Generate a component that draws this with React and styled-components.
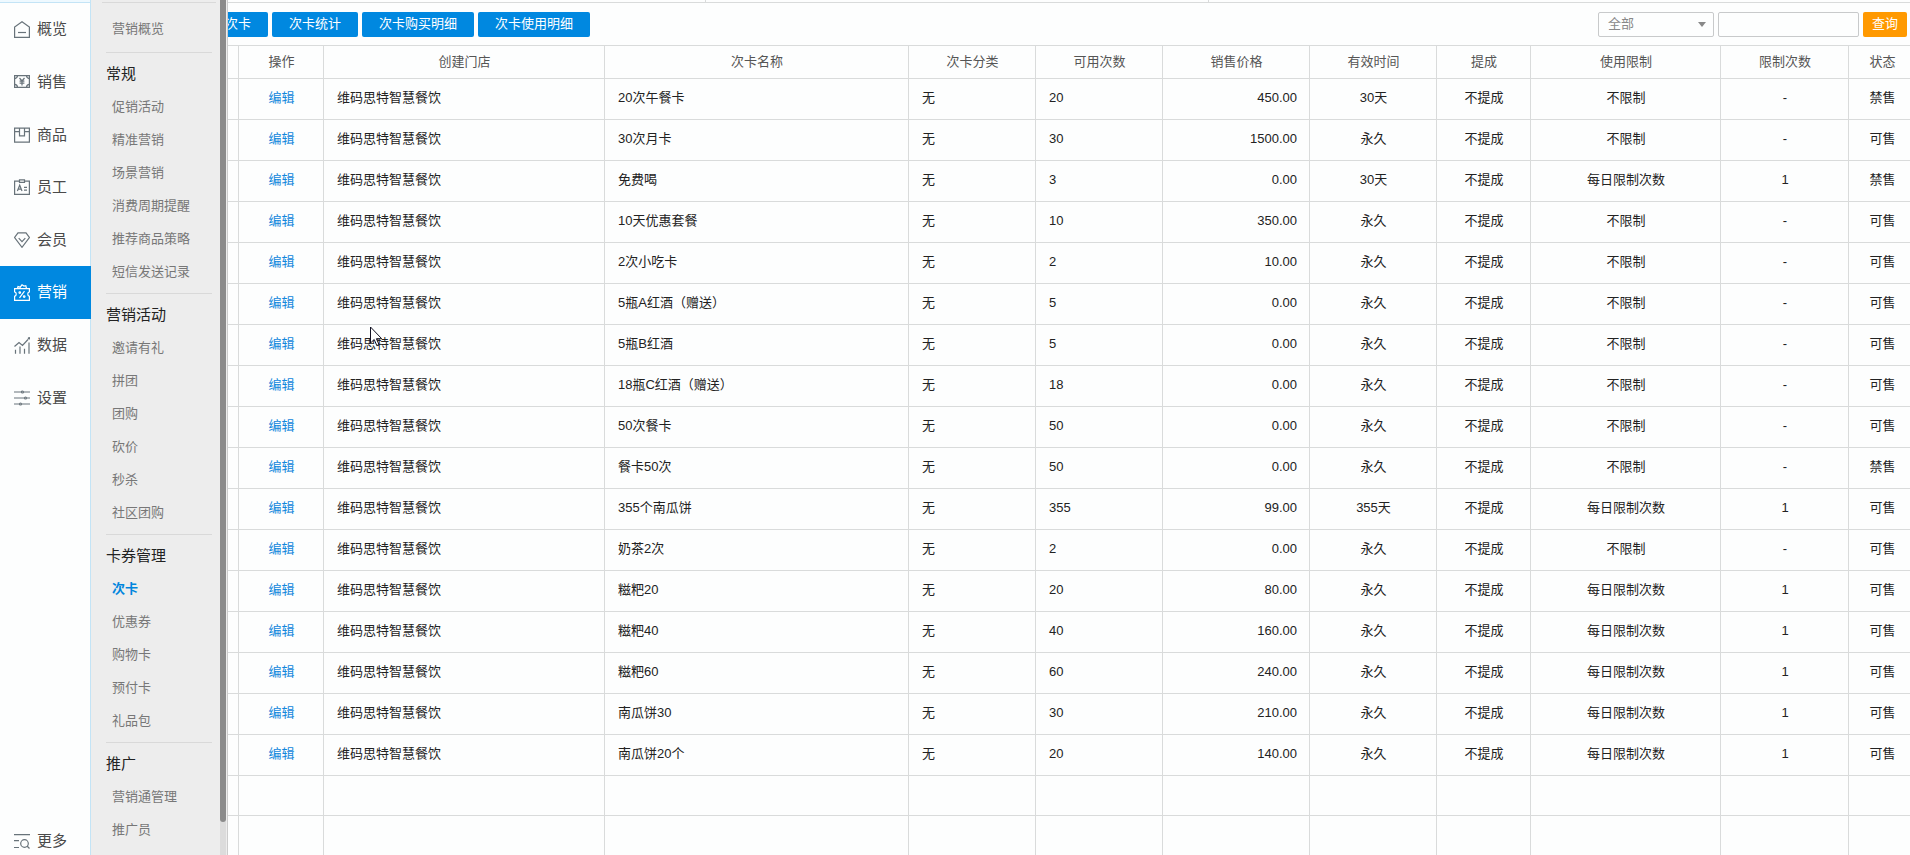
import React, { useState } from 'react'
import styled, { createGlobalStyle } from 'styled-components'

const GlobalStyle = createGlobalStyle`
  * {
    box-sizing: border-box;
  }

  body {
    margin: 0;
    background: #fdfefe;
    color: #222;
    font-family: 'Liberation Sans', 'Noto Sans CJK SC', sans-serif;
    font-size: 13px;
    overflow: hidden;
  }

  a {
    text-decoration: none;
  }

  button, input, select {
    font-family: inherit;
    font-size: 13px;
  }
`

const Page = styled.div`
  position: relative;
  display: grid;
  grid-template-columns: 91px 137px minmax(0, 1fr);
  height: 100vh;
  overflow: hidden;
`

/* ---------- main menu ---------- */

const Sidebar = styled.nav`
  display: flex;
  flex-direction: column;
  justify-content: space-between;
  min-height: 0;
  border-right: 1px solid #c3e4f6;
`

const SidebarTop = styled.div`
  height: 3px;
  background: #eef9ff;
  border-bottom: 1px solid #c3e4f6;
`

const MainMenu = styled.div`
  display: flex;
  flex-direction: column;
  height: 421px;
  margin-bottom: auto;
`

const MainLink = styled.a`
  flex: ${props => props.$bottom ? '0 0 28px' : '1'};
  display: flex;
  align-items: center;
  gap: 7px;
  padding-left: 14px;
  margin-right: ${props => props.$active ? '-1px' : '0'};
  font-size: 15px;
  line-height: 20px;
  color: ${props => props.$active ? '#fff' : '#4a4a4a'};
  background: ${props => props.$active ? '#0088e0' : 'transparent'};

  svg {
    flex: none;
    color: ${props => props.$active ? '#fff' : '#68737a'};
  }
`

/* ---------- sub menu ---------- */

const SubPanel = styled.aside`
  display: flex;
  justify-content: space-between;
  min-height: 0;
  background: #ededed;
  border-right: 1px solid #ccc;
`

const SubMenu = styled.nav`
  flex: 1;
  padding: 2px 4px 0 11px;
  overflow: hidden;
`

const SubHome = styled.div`
  padding: 9px 0 7px 10px;
  border-top: 1px solid #d9d9d9;
`

const SubSection = styled.section`
  margin: 0 4px;
  padding-bottom: 5px;
  border-top: 1px solid #d9d9d9;
`

const SubTitle = styled.h2`
  margin: 0;
  padding-top: 5px;
  font-size: 15px;
  font-weight: 400;
  line-height: 32px;
  color: #222;
`

const SubLink = styled.a`
  display: block;
  padding-left: ${props => props.$flush ? '0' : '6px'};
  line-height: 33px;
  white-space: nowrap;
  color: ${props => props.$active ? '#0085dd' : '#777'};
  font-weight: ${props => props.$active ? '700' : '400'};
`

const Track = styled.div`
  width: 6px;
  margin-right: 1px;
  background: #dcdcdc;
`

const Thumb = styled.div`
  height: calc(100% - 33px);
  background: #8b8b8b;
  border-radius: 0 0 3px 3px;
`

/* ---------- content ---------- */

const Content = styled.main`
  min-width: 0;
  overflow: hidden;
`

const TabStrip = styled.div`
  display: grid;
  grid-template-columns: 478px 503px 1fr;
  height: 3px;
  border-bottom: 1px solid #d9dbdb;
`

const TabEdge = styled.span`
  border-right: 1px solid #d9dbdb;
`

const Toolbar = styled.div`
  display: flex;
  gap: 4px;
  padding: 9px 3px 8px 0;
  margin-left: -20px;
`

const Button = styled.button`
  height: 25px;
  padding: 0 17px 2px;
  border: none;
  border-radius: 2px;
  background: #0088e0;
  color: #fff;
  line-height: 23px;
  white-space: nowrap;
`

const SearchButton = styled(Button)`
  padding: 0 9px 2px;
  background: #ff9900;
`

const Search = styled.form`
  display: flex;
  gap: 4px;
  margin-left: auto;
`

const SelectBox = styled.label`
  display: grid;
  align-items: center;
  width: 116px;

  select, svg {
    grid-area: 1 / 1;
  }

  svg {
    justify-self: end;
    margin-right: 8px;
    pointer-events: none;
  }
`

const Select = styled.select`
  appearance: none;
  height: 25px;
  padding: 0 20px 3px 9px;
  border: 1px solid #c8cacb;
  border-radius: 2px;
  background: #fdfefe;
  color: #888;
`

const Keyword = styled.input`
  width: 141px;
  height: 25px;
  padding: 0 8px;
  border: 1px solid #c8cacb;
  border-radius: 2px;
  background: #fdfefe;
`

const Table = styled.table`
  width: 100%;
  table-layout: fixed;
  border-collapse: separate;
  border-spacing: 0;
  border-top: 1px solid #d9dbdb;
`

const Col = styled.col`
  width: ${props => props.$width || 'auto'};
`

const Th = styled.th`
  height: 33px;
  padding: 0 0 0 ${props => props.$last ? '6px' : '1px'};
  border: solid #d9dbdb;
  border-width: 0 ${props => props.$last ? '0' : '1px'} 1px 0;
  color: #555;
  font-weight: 400;
  line-height: 18px;
  white-space: nowrap;
`

const padding = {
  left: '0 0 2px 13px',
  right: '0 12px 2px 0',
  center: '0 0 2px 1px',
  last: '0 0 2px 6px',
}

const Td = styled.td`
  height: ${props => props.$blank ? '40px' : '41px'};
  padding: ${props => padding[props.$place || 'center']};
  border: solid #d9dbdb;
  border-width: 0 ${props => props.$place === 'last' ? '0' : '1px'} 1px 0;
  text-align: ${props => ['left', 'right'].includes(props.$place) ? props.$place : 'center'};
  line-height: 18px;
  white-space: nowrap;
`

const EditLink = styled.a`
  color: #1287dc;
`

const Pointer = styled.svg`
  position: absolute;
  left: 370px;
  top: 326px;
`

/* ---------- icons ---------- */

const Icon = ({ children, height = 16 }) => (
  <svg width="16" height={height} viewBox={`0 0 16 ${height}`} fill="none" stroke="currentColor" strokeWidth="1.2" aria-hidden="true">
    {children}
  </svg>
)

const icons = {
  home: (
    <Icon height={17}>
      <path d="M.6 16.4V6L8 .8 15.400 6v10.400z" />
      <path d="M4 11.500h8" />
    </Icon>
  ),
  sale: (
    <Icon height={13}>
      <path d="M.6.6h14.800v11.800H.6z" />
      <path d="M.6 3.600Q3.400 3.400 3.500.6M15.400 3.600Q12.600 3.400 12.500.6M.6 9.400q2.800.2 2.900 3M15.400 9.400q-2.800.2-2.900 3" />
      <path d="M5.500 3l2.500 3 2.500-3M8 6v4.500M5.600 6.200h4.800M5.600 8.200h4.800" />
    </Icon>
  ),
  goods: (
    <Icon>
      <path d="M.6 1.100h14.800v14H.6zM.6 4.600h4.900M10.500 4.600h4.900M5.500 1v7.900h5V1" />
    </Icon>
  ),
  staff: (
    <Icon>
      <path d="M5.500 2.100H.6v13.300h14.800V2.100h-4.900" />
      <path d="M5.500.8h5v2.500h-5z" />
      <path d="M3.400 12L5.700 6.200 8 12M4.200 10.200h3M10 8.300h3M10 11.200h3" />
    </Icon>
  ),
  member: (
    <Icon>
      <path d="M4 .8h8l3.400 4.700L8 15.300.6 5.500z" />
      <path d="M4.700 6.200L8 9.600l3.300-3.400" />
    </Icon>
  ),
  market: (
    <Icon height={17}>
      <path d="M.6 4.600h14.800v3.200c-2.200.5-2.200 4 0 4.500v4.100H.6v-4.100c2.200-.5 2.200-4 0-4.500z" />
      <path d="M3.500 4.500L4 2.600l2.200.6L8 .8l2 1.200 1.800-.4.700 2.900M10.500 7.200l-5 6.600" />
      <circle cx="5.800" cy="8.600" r=".8" />
      <circle cx="10.200" cy="12.600" r=".8" />
    </Icon>
  ),
  data: (
    <Icon height={17}>
      <path d="M.5 9.500l4.500-4 3.500 3 5.500-6M1.500 16.800v-4M6 16.800V9.500M10.500 16.800v-5M15 16.800V5.500" />
      <circle cx="15" cy="1.300" r=".7" />
    </Icon>
  ),
  setting: (
    <Icon>
      <path d="M0 2h7M10 2h6M0 8h10M13 8h3M0 14h5M8 14h8" />
      <circle cx="8.500" cy="2" r="1" />
      <circle cx="11.500" cy="8" r="1" />
      <circle cx="6.500" cy="14" r="1" />
    </Icon>
  ),
  more: (
    <Icon>
      <path d="M0 1.600h16M0 7.600h5M0 14.500h5" />
      <circle cx="10.500" cy="10.500" r="3.800" />
      <path d="M13 13l2.500 2.500" />
    </Icon>
  ),
}

/* ---------- data ---------- */

const mainMenu = [
  ['home', '概览'],
  ['sale', '销售'],
  ['goods', '商品'],
  ['staff', '员工'],
  ['member', '会员'],
  ['market', '营销'],
  ['data', '数据'],
  ['setting', '设置'],
]

const subMenu = [
  { title: '常规', items: ['促销活动', '精准营销', '场景营销', '消费周期提醒', '推荐商品策略', '短信发送记录'] },
  { title: '营销活动', items: ['邀请有礼', '拼团', '团购', '砍价', '秒杀', '社区团购'] },
  { title: '卡券管理', items: ['次卡', '优惠券', '购物卡', '预付卡', '礼品包'] },
  { title: '推广', items: ['营销通管理', '推广员'] },
]

const columns = [
  { title: '', width: '11px' },
  { title: '操作', width: '85px' },
  { title: '创建门店', width: '281px', place: 'left' },
  { title: '次卡名称', place: 'left' },
  { title: '次卡分类', width: '127px', place: 'left' },
  { title: '可用次数', width: '127px', place: 'left' },
  { title: '销售价格', width: '147px', place: 'right' },
  { title: '有效时间', width: '127px' },
  { title: '提成', width: '94px' },
  { title: '使用限制', width: '190px' },
  { title: '限制次数', width: '128px' },
  { title: '状态', width: '61px', place: 'last' },
]

// name, count, price, valid time, daily limit, status
const cards = [
  ['20次午餐卡', '20', '450.00', '30天', '-', '禁售'],
  ['30次月卡', '30', '1500.00', '永久', '-', '可售'],
  ['免费喝', '3', '0.00', '30天', '1', '禁售'],
  ['10天优惠套餐', '10', '350.00', '永久', '-', '可售'],
  ['2次小吃卡', '2', '10.00', '永久', '-', '可售'],
  ['5瓶A红酒（赠送）', '5', '0.00', '永久', '-', '可售'],
  ['5瓶B红酒', '5', '0.00', '永久', '-', '可售'],
  ['18瓶C红酒（赠送）', '18', '0.00', '永久', '-', '可售'],
  ['50次餐卡', '50', '0.00', '永久', '-', '可售'],
  ['餐卡50次', '50', '0.00', '永久', '-', '禁售'],
  ['355个南瓜饼', '355', '99.00', '355天', '1', '可售'],
  ['奶茶2次', '2', '0.00', '永久', '-', '可售'],
  ['糍粑20', '20', '80.00', '永久', '1', '可售'],
  ['糍粑40', '40', '160.00', '永久', '1', '可售'],
  ['糍粑60', '60', '240.00', '永久', '1', '可售'],
  ['南瓜饼30', '30', '210.00', '永久', '1', '可售'],
  ['南瓜饼20个', '20', '140.00', '永久', '1', '可售'],
]

const toCells = ([name, count, price, valid, limit, status]) => [
  '',
  <EditLink href="#edit">编辑</EditLink>,
  '维码思特智慧餐饮',
  name,
  '无',
  count,
  price,
  valid,
  '不提成',
  limit === '-' ? '不限制' : '每日限制次数',
  limit,
  status,
]

const CardTable = () => (
  <Table>
    <colgroup>
      {columns.map((col, i) => <Col key={i} $width={col.width} />)}
    </colgroup>
    <thead>
      <tr>
        {columns.map((col, i) => <Th key={i} $last={col.place === 'last'}>{col.title}</Th>)}
      </tr>
    </thead>
    <tbody>
      {cards.map(card => (
        <tr key={card[0]}>
          {toCells(card).map((cell, i) => <Td key={i} $place={columns[i].place}>{cell}</Td>)}
        </tr>
      ))}
      {[0, 1].map(n => (
        <tr key={n}>
          {columns.map((col, i) => <Td key={i} $place={col.place} $blank />)}
        </tr>
      ))}
    </tbody>
  </Table>
)

const App = () => {
  const [keyword, setKeyword] = useState('')

  return (
    <Page>
      <GlobalStyle />
      <Sidebar>
        <SidebarTop />
        <MainMenu>
          {mainMenu.map(([icon, label]) => (
            <MainLink key={icon} href={`#${icon}`} $active={icon === 'market'}>
              {icons[icon]}
              {label}
            </MainLink>
          ))}
        </MainMenu>
        <MainLink href="#more" $bottom>
          {icons.more}
          更多
        </MainLink>
      </Sidebar>

      <SubPanel>
        <SubMenu>
          <SubHome>
            <SubLink href="#overview" $flush>营销概览</SubLink>
          </SubHome>
          {subMenu.map(section => (
            <SubSection key={section.title}>
              <SubTitle>{section.title}</SubTitle>
              {section.items.map(item => (
                <SubLink key={item} href="#sub" $active={item === '次卡'}>{item}</SubLink>
              ))}
            </SubSection>
          ))}
        </SubMenu>
        <Track>
          <Thumb />
        </Track>
      </SubPanel>

      <Content>
        <TabStrip>
          <TabEdge />
          <TabEdge />
        </TabStrip>
        <Toolbar>
          <Button type="button">次卡</Button>
          <Button type="button">次卡统计</Button>
          <Button type="button">次卡购买明细</Button>
          <Button type="button">次卡使用明细</Button>
          <Search onSubmit={e => e.preventDefault()}>
            <SelectBox>
              <Select aria-label="状态">
                <option>全部</option>
              </Select>
              <svg width="8" height="5" viewBox="0 0 8 5" aria-hidden="true">
                <path d="M0 0h8L4 5z" fill="#888" />
              </svg>
            </SelectBox>
            <Keyword aria-label="关键字" value={keyword} onChange={e => setKeyword(e.target.value)} />
            <SearchButton type="submit">查询</SearchButton>
          </Search>
        </Toolbar>
        <CardTable />
      </Content>

      <Pointer width="13" height="21" viewBox="0 0 13 21" aria-hidden="true">
        <path d="M.5 1v16l3.700-3.500 2.600 6 2.200-1-2.600-5.800h5.300z" fill="#fff" stroke="#112" />
      </Pointer>
    </Page>
  )
}

export default App
